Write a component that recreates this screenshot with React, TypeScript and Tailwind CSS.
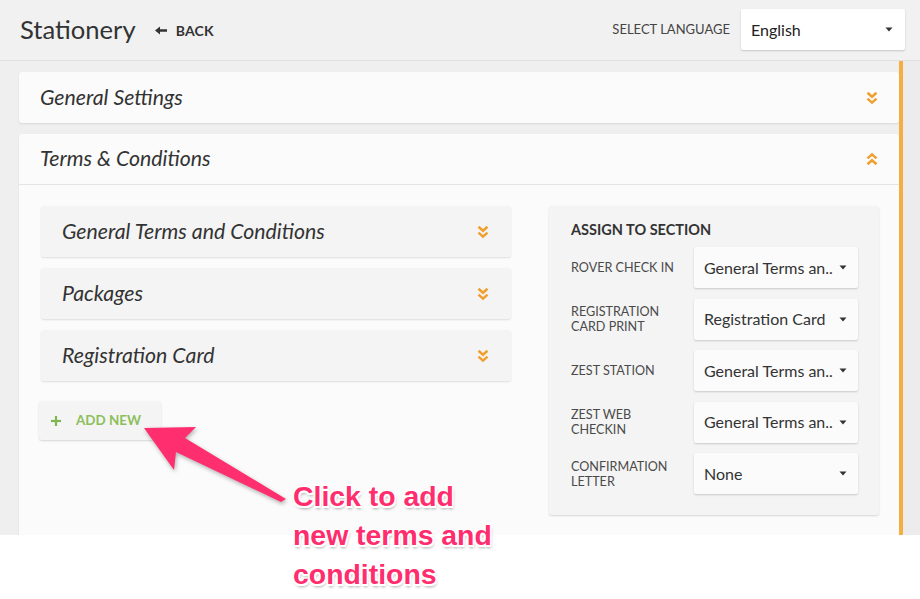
import React from "react";

const Chevrons = ({ up = false }: { up?: boolean }) => (
  <svg width="12" height="14" viewBox="0 0 12 14" className={up ? "rotate-180" : ""}>
    <polyline points="1.5,1.8 6,5.8 10.5,1.8" fill="none" stroke="#f0a030" strokeWidth="2.6" />
    <polyline points="1.5,7.6 6,11.6 10.5,7.6" fill="none" stroke="#f0a030" strokeWidth="2.6" />
  </svg>
);

const Caret = () => (
  <svg width="8" height="5" viewBox="0 0 8 5">
    <polygon points="0.5,0.5 7.5,0.5 4,4.5" fill="#333" />
  </svg>
);

const SubItem = ({ label }: { label: string }) => (
  <div className="h-[51px] flex items-center justify-between pl-[21px] pr-[22px] bg-[#f4f4f4] rounded-[3px] shadow-[0_1px_2px_rgba(0,0,0,0.12)]">
    <span className="italic text-[21.3px] text-[#333]">{label}</span>
    <Chevrons />
  </div>
);

const AssignRow = ({ label, value }: { label: React.ReactNode; value: string }) => (
  <div className="flex items-center h-[41px]">
    <div className="w-[123px] text-[12.6px] leading-[15px] text-[#4a4a4a] uppercase">{label}</div>
    <div className="w-[164px] h-[41px] bg-[#fbfbfb] rounded-[2px] shadow-[0_1px_2px_rgba(0,0,0,0.18)] flex items-center justify-between pl-[10px] pr-[11px]">
      <span className="text-[16px] text-[#333] whitespace-nowrap">{value}</span>
      <Caret />
    </div>
  </div>
);

export default function App() {
  return (
    <div className="relative w-[920px] h-[599px] bg-white overflow-hidden font-['Lato','Open_Sans',sans-serif]">
      <div className="h-[535px] bg-[#efefef] flex flex-col overflow-hidden">
        {/* Header */}
        <div className="h-[61px] shrink-0 bg-[#f1f1f1] border-b border-[#e0e0e0] flex items-center pl-[20px] pr-[15px]">
          <span className="text-[25.6px] text-[#333] leading-none">Stationery</span>
          <span className="ml-[19px] flex items-center gap-[9px] text-[#333]">
            <svg width="12" height="9" viewBox="0 0 12 9">
              <polygon points="0,4.5 5,0.5 5,3.3 12,3.3 12,5.7 5,5.7 5,8.5" fill="#333" />
            </svg>
            <span className="text-[14px] font-bold tracking-[0.2px]">BACK</span>
          </span>
          <div className="flex-1" />
          <span className="text-[13px] text-[#444] mr-[11px]">SELECT LANGUAGE</span>
          <div className="w-[164px] h-[41px] bg-white rounded-[2px] shadow-[0_1px_2px_rgba(0,0,0,0.18)] flex items-center justify-between pl-[10px] pr-[12px] -mt-[1px]">
            <span className="text-[16px] text-[#222]">English</span>
            <Caret />
          </div>
        </div>

        {/* Body */}
        <div className="flex flex-1 min-h-0">
          <div className="w-[899px] shrink-0 pl-[19px] pt-[11px] flex flex-col gap-[11px]">
            <div className="h-[51px] bg-[#fbfbfb] rounded-[3px] shadow-[0_1px_2px_rgba(0,0,0,0.1)] flex items-center justify-between pl-[21px] pr-[21px]">
              <span className="italic text-[21.3px] text-[#333]">General Settings</span>
              <Chevrons />
            </div>
            <div className="flex-1 bg-[#fbfbfb] rounded-t-[3px] shadow-[0_1px_2px_rgba(0,0,0,0.1)] flex flex-col">
              <div className="h-[51px] shrink-0 border-b border-[#e4e4e4] flex items-center justify-between pl-[21px] pr-[21px]">
                <span className="italic text-[21.3px] text-[#333]">Terms &amp; Conditions</span>
                <Chevrons up />
              </div>
              <div className="flex pl-[22px] pt-[21px]">
                <div className="w-[470px] flex flex-col">
                  <div className="flex flex-col gap-[11px]">
                    <SubItem label="General Terms and Conditions" />
                    <SubItem label="Packages" />
                    <SubItem label="Registration Card" />
                  </div>
                  <div className="mt-[20px] -ml-[2px] w-[122px] h-[39px] bg-[#f4f4f4] rounded-[3px] shadow-[0_1px_2px_rgba(0,0,0,0.15)] flex items-center pl-[12px] gap-[15px] text-[#8cbf5c]">
                    <svg width="10" height="10" viewBox="0 0 10 10">
                      <rect x="3.9" y="0" width="2.2" height="10" fill="#7fb552" />
                      <rect x="0" y="3.9" width="10" height="2.2" fill="#7fb552" />
                    </svg>
                    <span className="text-[13.4px] font-bold">ADD NEW</span>
                  </div>
                </div>
                <div className="ml-[38px] w-[330px] h-[309px] bg-[#f4f4f4] rounded-[3px] shadow-[0_1px_2px_rgba(0,0,0,0.15)] pl-[22px] pt-[15px]">
                  <div className="text-[14.5px] font-bold text-[#333] leading-[18px]">ASSIGN TO SECTION</div>
                  <div className="mt-[8px] flex flex-col gap-[10.5px]">
                    <AssignRow label="Rover Check In" value="General Terms an.." />
                    <AssignRow label={<>Registration<br />Card Print</>} value="Registration Card" />
                    <AssignRow label="Zest Station" value="General Terms an.." />
                    <AssignRow label={<>Zest Web<br />Checkin</>} value="General Terms an.." />
                    <AssignRow label={<>Confirmation<br />Letter</>} value="None" />
                  </div>
                </div>
              </div>
            </div>
          </div>
          <div className="w-[4px] shrink-0 bg-[#f6ae42]" />
          <div className="flex-1 bg-[#ececec]" />
        </div>
      </div>

      {/* Annotation arrow */}
      <svg
        className="absolute left-0 top-0 pointer-events-none drop-shadow-[1px_2px_2px_rgba(0,0,0,0.3)]"
        width="920"
        height="599"
        viewBox="0 0 920 599"
      >
        <polygon
          points="144,428 196,427 185,438 286,499 281,502 176,452 174,470"
          fill="#ff2e6f"
        />
      </svg>

      <div className="absolute left-[293px] top-[477px] font-['Liberation_Sans',Arial,sans-serif] font-bold text-[28.4px] leading-[39px] text-[#ff2d6e] [text-shadow:0_0_1px_#fff,1.5px_1.5px_0_#fff,-1.5px_-1.5px_0_#fff,1.5px_-1.5px_0_#fff,-1.5px_1.5px_0_#fff,0_2px_0_#fff,1px_3px_3px_rgba(0,0,0,0.35)]">
        Click to add
        <br />
        new terms and
        <br />
        conditions
      </div>
    </div>
  );
}
